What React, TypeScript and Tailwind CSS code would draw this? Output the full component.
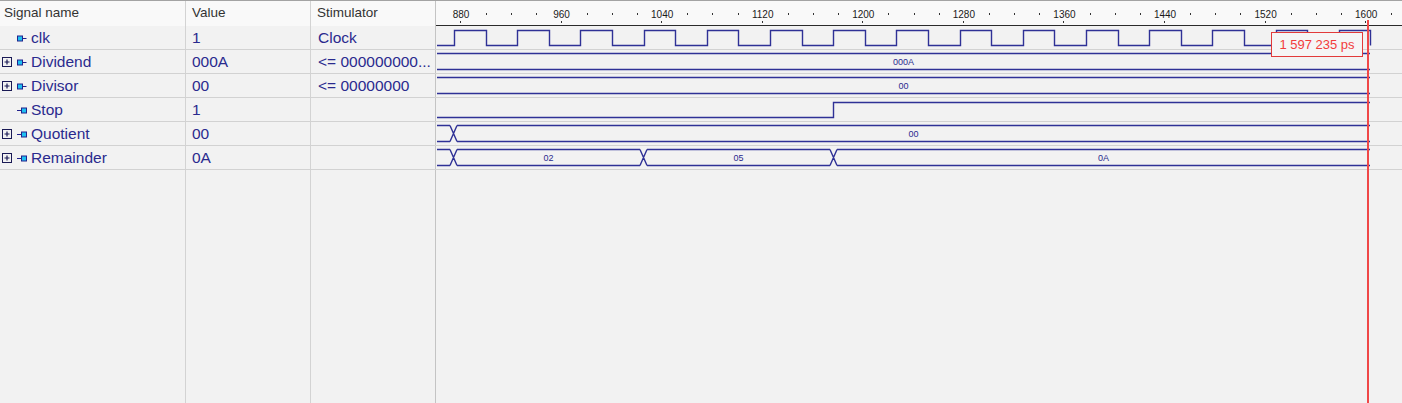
import React from "react";

/* ─────────── Geometry ─────────── */
const X0 = 436; // left edge of waveform pane
const WAVE_W = 966;
const END = 1370; // simulated until here
const HI = 4.5;
const LO = 19.5;
const TOP = 3.5;
const BOT = 19.5;
const INK = "#2f3196";
const NAVY = "#2a2a8e";

const tx = (t: number) => 461 + (t - 880) * 1.2572;

type Wave =
  | { kind: "clock" }
  | { kind: "step"; at: number }
  | { kind: "bus"; xs: number[]; labels: string[] };

type Signal = {
  name: string;
  value: string;
  stim: string;
  dir: "in" | "out";
  expand: boolean;
  wave: Wave;
};

const SIGNALS: Signal[] = [
  { name: "clk", value: "1", stim: "Clock", dir: "in", expand: false, wave: { kind: "clock" } },
  { name: "Dividend", value: "000A", stim: "<= 000000000...", dir: "in", expand: true, wave: { kind: "bus", xs: [], labels: ["000A"] } },
  { name: "Divisor", value: "00", stim: "<= 00000000", dir: "in", expand: true, wave: { kind: "bus", xs: [], labels: ["00"] } },
  { name: "Stop", value: "1", stim: "", dir: "out", expand: false, wave: { kind: "step", at: 833.5 } },
  { name: "Quotient", value: "00", stim: "", dir: "out", expand: true, wave: { kind: "bus", xs: [453.5], labels: ["", "00"] } },
  { name: "Remainder", value: "0A", stim: "", dir: "out", expand: true, wave: { kind: "bus", xs: [453.5, 643.5, 833.5], labels: ["", "02", "05", "0A"] } },
];

/* ─────────── Component ─────────── */
export default function App() {
  return (
    <div className="relative w-[1402px] h-[403px] overflow-hidden bg-[#f2f2f2] border-t border-[#a3a3a3] flex flex-col font-['Liberation_Sans',Arial,sans-serif]">
      {/* Header */}
      <div className="flex h-[25px] shrink-0 bg-[#f9f9f9] text-[13.5px] text-[#333]">
        <div className="w-[186px] border-r border-[#d3d3d3] pl-[4px] flex items-center">Signal name</div>
        <div className="w-[125px] border-r border-[#d3d3d3] pl-[6px] flex items-center">Value</div>
        <div className="w-[125px] border-r border-[#c4c4c4] pl-[6px] flex items-center">Stimulator</div>
        <div className="flex-1 border-b border-[#2b2b2b]">
          <Timeline />
        </div>
      </div>

      {/* Rows */}
      {SIGNALS.map((s) => (
        <div key={s.name} className="flex h-[24px] shrink-0 border-b border-[#d2d2d2] text-[15.5px] text-[#2a2a8e]">
          <div className="w-[186px] border-r border-[#d3d3d3] pl-[2px] flex items-center pt-px">
            <span className="w-[10px] h-[10px] flex">{s.expand && <PlusBox />}</span>
            <span className="ml-[5px] flex">{s.dir === "in" ? <InPort /> : <OutPort />}</span>
            <span className="ml-[4px] leading-none">{s.name}</span>
          </div>
          <div className="w-[125px] border-r border-[#d3d3d3] pl-[6px] flex items-center pt-px">{s.value}</div>
          <div className="w-[125px] border-r border-[#c4c4c4] pl-[7px] flex items-center pt-px whitespace-nowrap overflow-hidden">{s.stim}</div>
          <div className="flex-1">
            <WaveRow wave={s.wave} />
          </div>
        </div>
      ))}

      {/* Empty area */}
      <div className="flex flex-1">
        <div className="w-[186px] border-r border-[#d3d3d3]" />
        <div className="w-[125px] border-r border-[#d3d3d3]" />
        <div className="w-[125px] border-r border-[#c4c4c4]" />
        <div className="flex-1" />
      </div>

      {/* Cursor */}
      <div className="absolute z-10 left-[1367px] top-[19px] bottom-0 w-[2px] bg-[#f04848]" />
      <div className="absolute z-10 left-[1271px] top-[31px] w-[92px] h-[25px] border border-[#e23a3a] bg-[#f5f5f5] text-[13px] text-[#f23c3c] flex items-center justify-center">
        1 597 235 ps
      </div>
    </div>
  );
}

/* ─── Sub-components ─── */

function Timeline() {
  const majors: number[] = [];
  const minors: number[] = [];
  for (let t = 880; t <= 1620; t += 20) {
    if ((t - 880) % 80 === 0) majors.push(t);
    else minors.push(t);
  }
  return (
    <svg width={WAVE_W} height={24} viewBox={`${X0} 0 ${WAVE_W} 24`} className="block">
      {majors.map((t) => (
        <g key={t}>
          <text x={tx(t)} y={17} textAnchor="middle" fontSize={10} fill="#1a1a1a" fontFamily="'Liberation Sans', Arial, sans-serif">
            {t}
          </text>
          <rect x={Math.round(tx(t)) - 1} y={20} width={1} height={2} fill="#333" />
        </g>
      ))}
      {minors.map((t) => (
        <rect key={t} x={Math.round(tx(t))} y={12} width={1} height={2} fill="#333" />
      ))}
    </svg>
  );
}

function WaveRow({ wave }: { wave: Wave }) {
  let d = "";
  const texts: { x: number; label: string }[] = [];

  if (wave.kind === "clock") {
    d = `M${X0 + 1} ${LO}`;
    for (let k = 0; k < 15; k++) {
      const r = Math.round(454 + k * 63.2) + 0.5;
      const f = Math.round(454 + k * 63.2 + 31.6) + 0.5;
      d += ` H${r} V${HI} H${f} V${LO}`;
    }
  } else if (wave.kind === "step") {
    d = `M${X0 + 1} ${LO} H${wave.at} V${HI} H${END}`;
  } else {
    const hw = 3.5;
    const edges = [X0 + 1, ...wave.xs, END];
    for (let i = 0; i < edges.length - 1; i++) {
      const sx = i === 0 ? edges[0] : edges[i] + hw;
      const ex = i === edges.length - 2 ? END : edges[i + 1] - hw;
      d += ` M${sx} ${TOP} H${ex} M${sx} ${BOT} H${ex}`;
      if (wave.labels[i]) texts.push({ x: (sx + ex) / 2, label: wave.labels[i] });
    }
    for (const c of wave.xs) {
      d += ` M${c - hw} ${TOP} L${c + hw} ${BOT} M${c - hw} ${BOT} L${c + hw} ${TOP}`;
    }
  }

  return (
    <svg width={WAVE_W} height={23} viewBox={`${X0} 0 ${WAVE_W} 23`} className="block">
      <path d={d} fill="none" stroke={INK} strokeWidth={1.4} />
      {texts.map((t) => (
        <text key={t.x} x={t.x} y={14.5} textAnchor="middle" fontSize={9} fill={NAVY} fontFamily="'Liberation Sans', Arial, sans-serif">
          {t.label}
        </text>
      ))}
    </svg>
  );
}

function PlusBox() {
  return (
    <svg width={10} height={10} viewBox="0 0 10 10">
      <rect x={0.5} y={0.5} width={9} height={9} fill="none" stroke="#1a1a55" />
      <path d="M2.5 5H7.5M5 2.5V7.5" stroke="#1a1a55" strokeWidth={1.2} />
    </svg>
  );
}

function InPort() {
  return (
    <svg width={10} height={7} viewBox="0 0 10 7">
      <rect x={0.5} y={1} width={5} height={5} fill="#1ec0f2" stroke="#22228c" />
      <path d="M5.5 3.5H9.5" stroke="#22228c" />
    </svg>
  );
}

function OutPort() {
  return (
    <svg width={10} height={7} viewBox="0 0 10 7">
      <path d="M0 3.5H4.5" stroke="#22228c" />
      <rect x={4.5} y={1} width={5} height={5} fill="#1ec0f2" stroke="#22228c" />
    </svg>
  );
}
